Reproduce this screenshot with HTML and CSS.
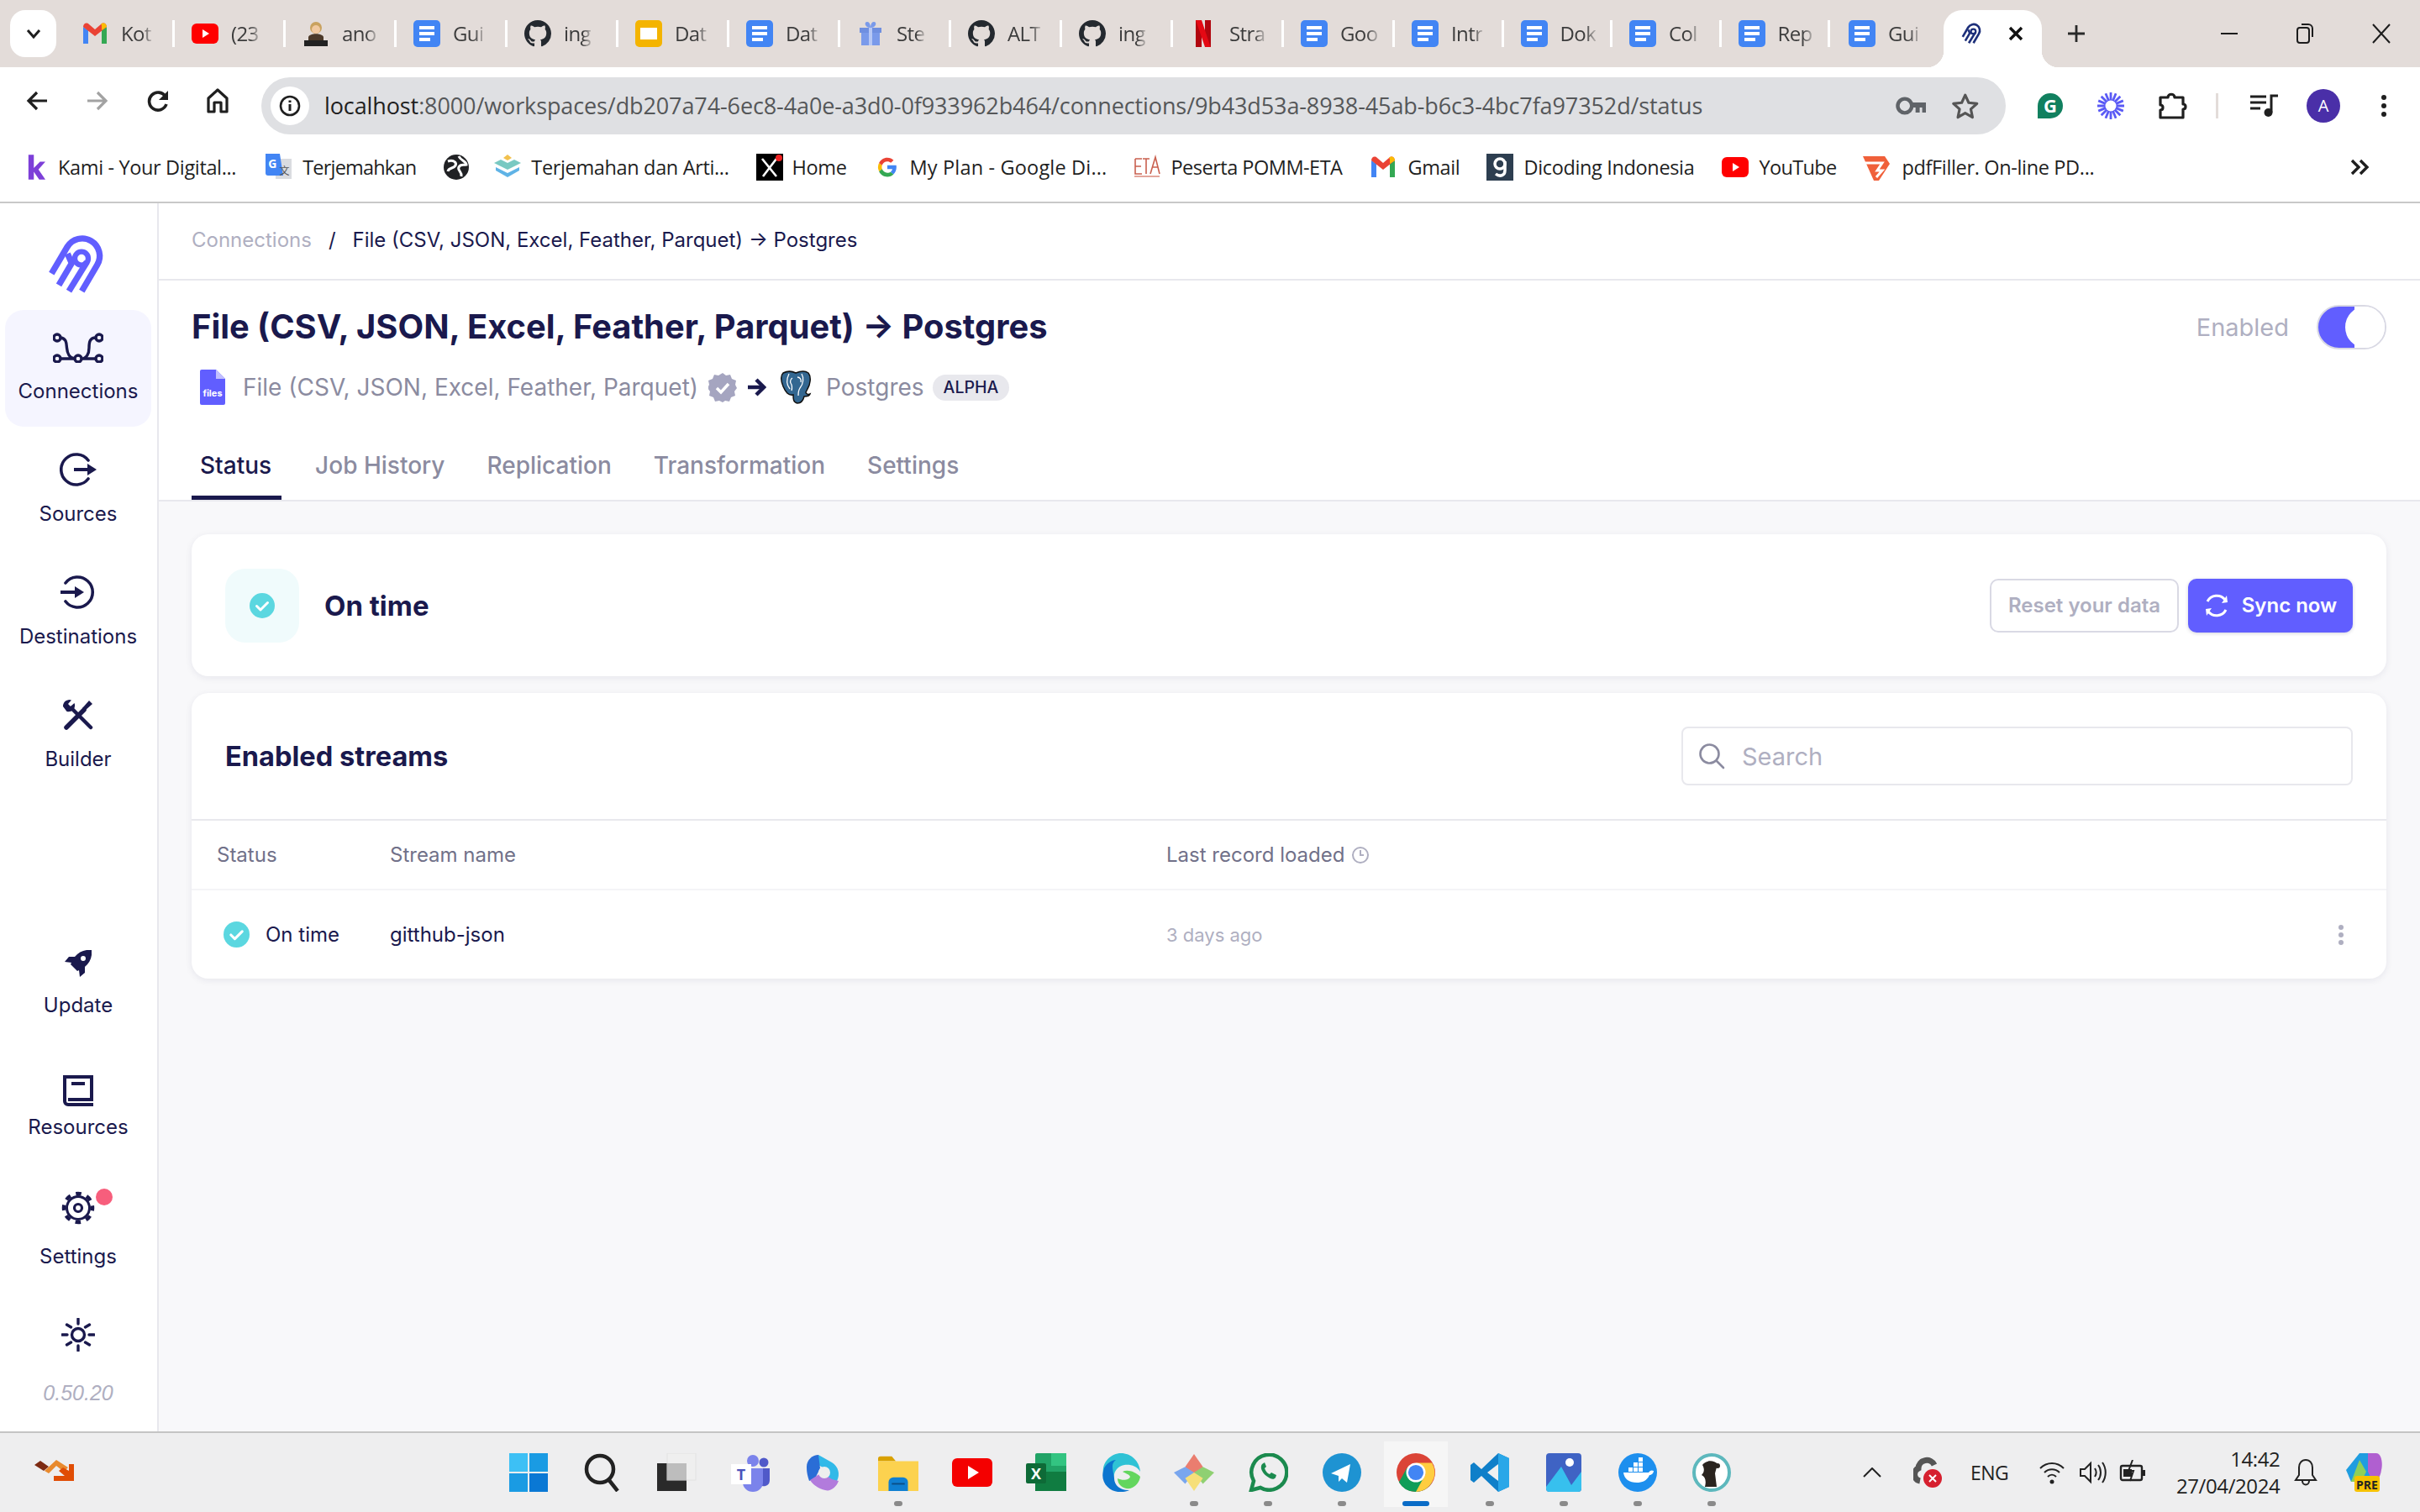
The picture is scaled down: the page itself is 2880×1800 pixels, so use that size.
FILE: index.html
```html
<!DOCTYPE html>
<html lang="en">
<head>
<meta charset="utf-8">
<title>Airbyte status</title>
<link rel="stylesheet" href="styles.css">
</head>
<body>
<svg class="defs" width="0" height="0" aria-hidden="true">
  <symbol id="i-docs" viewBox="0 0 32 32"><rect width="32" height="32" rx="5" fill="#4285f4"/><rect x="7" y="7" width="18" height="4" fill="#fff"/><rect x="7" y="14" width="18" height="4" fill="#fff"/><rect x="7" y="21" width="13" height="4" fill="#fff"/></symbol>
  <symbol id="i-gh" viewBox="0 0 16 16"><path fill="#24292f" d="M8 0C3.58 0 0 3.58 0 8c0 3.54 2.29 6.53 5.47 7.59.4.07.55-.17.55-.38 0-.19-.01-.82-.01-1.49-2.01.37-2.53-.49-2.69-.94-.09-.23-.48-.94-.82-1.13-.28-.15-.68-.52-.01-.53.63-.01 1.08.58 1.23.82.72 1.21 1.87.87 2.33.66.07-.52.28-.87.51-1.07-1.78-.2-3.64-.89-3.64-3.95 0-.87.31-1.59.82-2.15-.08-.2-.36-1.02.08-2.12 0 0 .67-.21 2.2.82.64-.18 1.32-.27 2-.27.68 0 1.36.09 2 .27 1.53-1.04 2.2-.82 2.2-.82.44 1.1.16 1.92.08 2.12.51.56.82 1.27.82 2.15 0 3.07-1.87 3.75-3.65 3.95.29.25.54.73.54 1.48 0 1.07-.01 1.93-.01 2.2 0 .21.15.46.55.38A8.013 8.013 0 0016 8c0-4.42-3.58-8-8-8z"/></symbol>
  <symbol id="i-gmail" viewBox="0 0 32 32"><path d="M2 28V8l6 4v16z" fill="#4285f4"/><path d="M24 28V12l6-4v20z" fill="#34a853"/><path d="M2 8c0-4 4-6 7-3l7 6 7-6c3-3 7-1 7 3l-14 11z" fill="#ea4335"/><path d="M23 5c3-3 7-1 7 3l-6 4v-6z" fill="#fbbc04"/></symbol>
  <symbol id="i-yt" viewBox="0 0 32 32"><rect y="4" width="32" height="24" rx="6" fill="#f00"/><path d="M13 11l8 5-8 5z" fill="#fff"/></symbol>
  <symbol id="i-air" viewBox="0 0 270 270"><g fill="none" stroke-linecap="butt" stroke-linejoin="round"><path stroke-width="22" d="M148 230L203 136A62 62 0 0 0 96 72L40 167"/><path stroke-width="22" d="M66 208L112 130L97 96"/><circle cx="147" cy="113" r="24" stroke-width="19"/><path stroke-width="22" d="M102 230L166 126"/></g></symbol>
  <symbol id="i-check" viewBox="0 0 30 30"><circle cx="15" cy="15" r="15" fill="#5bd7e0"/><path d="M8.500 15.500l4.500 4.500 8.500-8.500" fill="none" stroke="#fff" stroke-width="3" stroke-linecap="round" stroke-linejoin="round"/></symbol>
</svg>

<div class="screen">
  <header class="tabstrip">
    <button class="tabmenu" type="button"><svg width="18" height="12" viewBox="0 0 18 12"><path d="M2 2l7 8 7-8" fill="none" stroke="#1f1f1f" stroke-width="3"/></svg></button>
    <div class="tab tab--first"><svg class="fav"><use href="#i-gmail"/></svg><span class="tab-t">Kot</span></div>
    <div class="tab"><svg class="fav"><use href="#i-yt"/></svg><span class="tab-t">(23</span></div>
    <div class="tab"><svg class="fav" viewBox="0 0 32 32"><circle cx="16" cy="9" r="7" fill="#c9a25f"/><path d="M7 20c2-5 16-5 18 0v8H7z" fill="#4c3a2a"/><circle cx="16" cy="11" r="5" fill="#f1c9a0"/><rect x="2" y="24" width="28" height="7" fill="#222"/></svg><span class="tab-t">ano</span></div>
    <div class="tab"><svg class="fav"><use href="#i-docs"/></svg><span class="tab-t">Gui</span></div>
    <div class="tab"><svg class="fav"><use href="#i-gh"/></svg><span class="tab-t">ing</span></div>
    <div class="tab"><svg class="fav" viewBox="0 0 32 32"><rect width="32" height="32" rx="5" fill="#f4b400"/><rect x="6" y="9" width="20" height="14" fill="#fff"/></svg><span class="tab-t">Dat</span></div>
    <div class="tab"><svg class="fav"><use href="#i-docs"/></svg><span class="tab-t">Dat</span></div>
    <div class="tab"><svg class="fav" viewBox="0 0 32 32"><rect x="3" y="9" width="26" height="6" fill="#6f8fe0"/><rect x="5" y="15" width="22" height="15" fill="#7a9aea"/><rect x="14" y="9" width="4" height="21" fill="#b7c8f5"/><path d="M16 9C9 9 8 2 12 2s4 7 4 7 0-7 4-7 3 7-4 7z" fill="#7a9aea"/></svg><span class="tab-t">Ste</span></div>
    <div class="tab"><svg class="fav"><use href="#i-gh"/></svg><span class="tab-t">ALT</span></div>
    <div class="tab"><svg class="fav"><use href="#i-gh"/></svg><span class="tab-t">ing</span></div>
    <div class="tab"><svg class="fav" viewBox="0 0 32 32"><path d="M7 0h7v32l-7 1z" fill="#b1060f"/><path d="M18 0h7v33l-7-1z" fill="#b1060f"/><path d="M7 0h7l11 33-7-1z" fill="#e50914"/></svg><span class="tab-t">Stra</span></div>
    <div class="tab"><svg class="fav"><use href="#i-docs"/></svg><span class="tab-t">Goo</span></div>
    <div class="tab tab--narrow"><svg class="fav"><use href="#i-docs"/></svg><span class="tab-t">Intr</span></div>
    <div class="tab tab--narrow"><svg class="fav"><use href="#i-docs"/></svg><span class="tab-t">Dok</span></div>
    <div class="tab tab--narrow"><svg class="fav"><use href="#i-docs"/></svg><span class="tab-t">Col</span></div>
    <div class="tab tab--narrow"><svg class="fav"><use href="#i-docs"/></svg><span class="tab-t">Rep</span></div>
    <div class="tab tab--last"><svg class="fav"><use href="#i-docs"/></svg><span class="tab-t">Gui</span></div>
    <div class="tab-active">
      <svg class="fav air-navy"><use href="#i-air"/></svg>
      <svg width="18" height="18" viewBox="0 0 18 18"><path d="M2 2l14 14M16 2L2 16" stroke="#111" stroke-width="3.400"/></svg>
    </div>
    <svg class="newtab" width="22" height="22" viewBox="0 0 22 22"><path d="M11 1v20M1 11h20" stroke="#2a2a2a" stroke-width="2.800"/></svg>
    <div class="winctl">
      <svg width="20" height="4" viewBox="0 0 20 4"><path d="M0 2h20" stroke="#1c1c1c" stroke-width="2"/></svg>
      <svg width="22" height="26" viewBox="0 0 22 26"><rect x="2" y="6" width="14" height="18" rx="3" fill="none" stroke="#1c1c1c" stroke-width="2"/><path d="M7 2h8a5 5 0 0 1 5 5v10" fill="none" stroke="#1c1c1c" stroke-width="2"/></svg>
      <svg width="22" height="24" viewBox="0 0 22 24"><path d="M1 1l20 22M21 1L1 23" stroke="#1c1c1c" stroke-width="2"/></svg>
    </div>
  </header>

  <div class="toolbar">
    <svg class="tool tool--back" width="26" height="24" viewBox="0 0 26 24"><path d="M25 12H4M13 2L3 12l10 10" fill="none" stroke="#1f1f1f" stroke-width="3.200"/></svg>
    <svg class="tool tool--fwd" width="26" height="24" viewBox="0 0 26 24"><path d="M1 12h21M13 2l10 10-10 10" fill="none" stroke="#a2a2a2" stroke-width="3.200"/></svg>
    <svg class="tool tool--reload" width="26" height="28" viewBox="0 0 26 28"><path d="M22 9a10.500 10.500 0 1 0 1 9" fill="none" stroke="#1f1f1f" stroke-width="3.600"/><path d="M25 2v11H14z" fill="#1f1f1f"/></svg>
    <svg class="tool tool--home" width="26" height="30" viewBox="0 0 26 30"><path d="M2 12L13 2l11 10v16h-7V17H9v11H2z" fill="none" stroke="#1f1f1f" stroke-width="3.200" stroke-linejoin="round"/></svg>
    <div class="omnibox">
      <span class="omni-info"><svg width="26" height="26" viewBox="0 0 26 26"><circle cx="13" cy="13" r="11" fill="none" stroke="#1f1f1f" stroke-width="2.600"/><path d="M13 11v8M13 6.500v2.500" stroke="#1f1f1f" stroke-width="3"/></svg></span>
      <span class="omni-url"><span class="omni-host">localhost</span>:8000/workspaces/db207a74-6ec8-4a0e-a3d0-0f933962b464/connections/9b43d53a-8938-45ab-b6c3-4bc7fa97352d/status</span>
      <svg width="37" height="26" viewBox="0 0 37 26"><circle cx="11" cy="13" r="8.500" fill="none" stroke="#5f6368" stroke-width="4.500"/><path d="M19 9h18v12h-5v-6h-3v6h-5v-6h-5z" fill="#5f6368"/></svg>
      <svg class="omni-star" width="34" height="32" viewBox="0 0 34 32"><path d="M17 3l4.200 9.200 10 1.100-7.400 6.700 2 9.800-8.800-5-8.800 5 2-9.800-7.400-6.700 10-1.100z" fill="none" stroke="#555" stroke-width="3.200" stroke-linejoin="round"/></svg>
    </div>
    <div class="ext">
      <svg width="30" height="30" viewBox="0 0 30 30"><path d="M15 0a15 15 0 0 0-15 15v15h15a15 15 0 0 0 0-30z" fill="#11805f"/><text x="15" y="23" text-anchor="middle" class="ext-g">G</text></svg>
      <svg class="ext-star" width="32" height="32" viewBox="0 0 32 32"><g stroke="#5a5af5" stroke-width="2.800"><path d="M16 0v32M0 16h32M4.700 4.700l22.600 22.600M27.300 4.700L4.700 27.300M9.900 1.200l12.200 29.600M22.100 1.200L9.900 30.800M1.200 9.900l29.600 12.200M30.800 9.900L1.200 22.100"/></g><circle cx="16" cy="16" r="6.500" fill="#fff"/></svg>
      <svg class="ext-puzzle" width="36" height="32" viewBox="0 0 36 32"><path d="M3 6h9c0-5 8-5 8 0h10v8c4 0 4 6 0 6v10H3v-9c4 0 4-6 0-6z" fill="none" stroke="#1f1f1f" stroke-width="3.200" stroke-linejoin="round"/></svg>
      <span class="ext-sep"></span>
      <svg class="ext-music" width="34" height="28" viewBox="0 0 34 28"><path d="M0 3h19M0 10h19M0 17h12" stroke="#1f1f1f" stroke-width="3"/><path d="M25 22V2h8" fill="none" stroke="#1f1f1f" stroke-width="3"/><circle cx="21.500" cy="22" r="5" fill="#1f1f1f"/></svg>
      <span class="avatar">A</span>
      <svg class="ext-dots" width="6" height="26" viewBox="0 0 6 26"><circle cx="3" cy="3" r="3" fill="#1f1f1f"/><circle cx="3" cy="13" r="3" fill="#1f1f1f"/><circle cx="3" cy="23" r="3" fill="#1f1f1f"/></svg>
    </div>
  </div>

  <nav class="bookmarks">
    <span class="bm bm--kami"><svg class="bm-i bm-i--k" viewBox="0 0 24 32"><path d="M2 0h7v17l8-8h7l-9 10 9 13h-8l-7-10v10H2z" fill="#7d3fd8"/></svg>Kami - Your Digital...</span>
    <span class="bm bm--terj"><svg class="bm-i" viewBox="0 0 32 32"><rect x="12" y="6" width="19" height="24" fill="#dadce0"/><path d="M0 0h17l4 26H3a3 3 0 0 1-3-3z" fill="#4285f4"/><text x="8" y="17" text-anchor="middle" class="bm-g">G</text><text x="22" y="25" text-anchor="middle" class="bm-z">文</text></svg>Terjemahkan</span>
    <span class="bm bm--globe"><svg class="bm-i" viewBox="0 0 32 32"><circle cx="16" cy="16" r="15" fill="#202124"/><path d="M6 9c6-2 11 1 9 5s-8 2-9 7M19 3c2 5 9 6 9 10-4 1-7-1-9 3s4 5 3 11" fill="none" stroke="#fff" stroke-width="3"/></svg></span>
    <span class="bm"><svg class="bm-i" viewBox="0 0 32 32"><path d="M0 11l8-4 8 4 8-4 8 4-16 8z" fill="#79c9c2"/><path d="M2 16l14 7 14-7v4l-14 8-14-8z" fill="#5fb3e6"/><path d="M11 5l5-4 5 4-5 3z" fill="#f2c14e"/></svg>Terjemahan dan Arti...</span>
    <span class="bm bm--home"><svg class="bm-i" viewBox="0 0 32 32"><rect width="32" height="32" fill="#000"/><path d="M7 6l17 21M24 6L8 27" stroke="#fff" stroke-width="2.600"/><circle cx="27" cy="5" r="4" fill="#e22"/></svg>Home</span>
    <span class="bm bm--plan"><svg class="bm-i bm-i--g" viewBox="0 0 48 48"><path d="M44 24c0-1.500-.1-3-.4-4H24v8h11c-.5 3-2 5-4 6.500l6.500 5C41.500 36 44 30.500 44 24z" fill="#4285f4"/><path d="M24 45c5.600 0 10.300-1.900 13.500-5.500l-6.500-5c-1.800 1.200-4.100 2-7 2-5.400 0-10-3.600-11.600-8.600l-6.700 5.200C9 40.400 15.900 45 24 45z" fill="#34a853"/><path d="M12.400 28a13 13 0 0 1 0-8l-6.700-5.200a21 21 0 0 0 0 18.400z" fill="#fbbc05"/><path d="M24 11.500c3 0 5.700 1 7.800 3l5.900-5.900C34.300 5.200 29.600 3 24 3 15.900 3 9 7.600 5.700 14.800l6.700 5.200C14 15 18.600 11.500 24 11.500z" fill="#ea4335"/></svg>My Plan - Google Di...</span>
    <span class="bm bm--pom"><svg class="bm-i" viewBox="0 0 32 32"><path d="M2 6h8M2 6v18h8M2 15h7M11 6h8M15 6v18M20 24l6-20 5 20M23 16h6" fill="none" stroke="#c9604f" stroke-width="1.600"/><rect x="1" y="26" width="30" height="2" fill="#e3a69c"/></svg>Peserta POMM-ETA</span>
    <span class="bm bm--gmail"><svg class="bm-i"><use href="#i-gmail"/></svg>Gmail</span>
    <span class="bm"><svg class="bm-i" viewBox="0 0 32 32"><rect width="32" height="32" fill="#2d3e50"/><path d="M11 24c5 4 11 2 11-4V9" fill="none" stroke="#fff" stroke-width="3.500"/><circle cx="16" cy="12" r="6" fill="none" stroke="#fff" stroke-width="3.500"/></svg>Dicoding Indonesia</span>
    <span class="bm bm--yt"><svg class="bm-i"><use href="#i-yt"/></svg>YouTube</span>
    <span class="bm bm--pdf"><svg class="bm-i" viewBox="0 0 32 32"><path d="M0 3h26l6 9-13 20h-6z" fill="#f0603a"/><path d="M3 11h20l-6 9h6l-7 8" fill="none" stroke="#fff" stroke-width="3"/></svg>pdfFiller. On-line PD...</span>
    <svg class="bm-more" width="24" height="20" viewBox="0 0 24 20"><path d="M2 2l8 8-8 8M12 2l8 8-8 8" fill="none" stroke="#1f1f1f" stroke-width="3.400"/></svg>
  </nav>

  <div class="app">
    <aside class="side">
      <svg class="logo air-purple"><use href="#i-air"/></svg>
      <a class="nav nav--active">
        <span class="nav-i"><svg width="60" height="36" viewBox="0 0 60 36"><g fill="none" stroke="#1a194d" stroke-width="3.400"><circle cx="5" cy="6" r="4"/><circle cx="55" cy="6" r="4"/><circle cx="5" cy="31" r="4"/><circle cx="30" cy="31" r="4"/><circle cx="55" cy="31" r="4"/><path d="M9 31h17M34 31h17M9 6c7 1 7 6 7.500 12s3 13 9.500 13M51 6c-7 0-8 5-8 12s-3 13-9 13"/></g></svg></span>
        <span class="nav-l">Connections</span>
      </a>
      <a class="nav">
        <span class="nav-i"><svg width="44" height="40" viewBox="0 0 44 40"><path d="M34 9A18 18 0 1 0 34 31" fill="none" stroke="#1a194d" stroke-width="3.600" stroke-linecap="round"/><path d="M17 20h20" stroke="#1a194d" stroke-width="4"/><path d="M33 13l11 7-11 7z" fill="#1a194d"/></svg></span>
        <span class="nav-l">Sources</span>
      </a>
      <a class="nav">
        <span class="nav-i"><svg width="42" height="40" viewBox="0 0 42 40"><path d="M6 9A18 18 0 1 1 6 31" fill="none" stroke="#1a194d" stroke-width="3.600" stroke-linecap="round"/><path d="M0 20h20" stroke="#1a194d" stroke-width="4"/><path d="M17 13l11 7-11 7z" fill="#1a194d"/></svg></span>
        <span class="nav-l">Destinations</span>
      </a>
      <a class="nav">
        <span class="nav-i"><svg width="36" height="36" viewBox="0 0 36 36"><path d="M10 10l23 23" stroke="#1a194d" stroke-width="4.500" stroke-linecap="round"/><path d="M25 12L4 33" stroke="#1a194d" stroke-width="5.500" stroke-linecap="round"/><path d="M0 8a7.500 7.500 0 0 1 10-7.500L6 5l3 3 4.500-4a7.500 7.500 0 0 1-9 10z" fill="#1a194d"/><path d="M23 10L31 1l4 4-9 8z" fill="#1a194d"/></svg></span>
        <span class="nav-l">Builder</span>
      </a>

      <div class="side-bottom">
        <a class="nav-b nav-b--update">
          <svg width="32" height="32" viewBox="0 0 32 32"><path d="M32 0c-8-1-15 2-20 8H5l-5 6 8 1-1 2 8 8 2-1 1 8 6-5v-7c6-5 9-12 8-20z" fill="#1a194d"/><circle cx="22" cy="10" r="3" fill="#fff"/></svg>
          <span class="nav-l">Update</span>
        </a>
        <a class="nav-b nav-b--res">
          <svg width="36" height="39" viewBox="0 0 36 39"><path d="M36 36H6a4 4 0 0 1-4-4V3h32v27H6" fill="none" stroke="#1a194d" stroke-width="4"/><path d="M10 11h16" stroke="#1a194d" stroke-width="4"/></svg>
          <span class="nav-l">Resources</span>
        </a>
        <a class="nav-b nav-b--set">
          <span class="gear"><svg width="40" height="40" viewBox="0 0 40 40"><circle cx="20" cy="20" r="13.500" fill="none" stroke="#1a194d" stroke-width="3"/><circle cx="20" cy="20" r="17" fill="none" stroke="#1a194d" stroke-width="4.500" stroke-dasharray="6.600 6.750" stroke-dashoffset="3.300"/><circle cx="20" cy="20" r="4.500" fill="none" stroke="#1a194d" stroke-width="3.200"/></svg><span class="badge-dot"></span></span>
          <span class="nav-l">Settings</span>
        </a>
        <a class="nav-b nav-b--ver">
          <svg width="40" height="40" viewBox="0 0 40 40"><circle cx="20" cy="20" r="7.500" fill="none" stroke="#1a194d" stroke-width="3.400"/><path d="M20 1v6M20 33v6M1 20h6M33 20h6M6.500 8l5 3M28.500 29l5 3M6.500 32l5-3M28.500 11l5-3" stroke="#1a194d" stroke-width="3.400" stroke-linecap="round"/></svg>
          <span class="ver">0.50.20</span>
        </a>
      </div>
    </aside>

    <main class="main">
      <div class="crumbs"><span class="crumb-a">Connections</span><span class="crumb-s">/</span><span class="crumb-c">File (CSV, JSON, Excel, Feather, Parquet) → Postgres</span></div>
      <section class="head">
        <div class="head-top">
          <div>
            <h1 class="title">File (CSV, JSON, Excel, Feather, Parquet) → Postgres</h1>
            <div class="pair">
              <svg class="file-i" width="30" height="42" viewBox="0 0 30 42"><path d="M2 0h17l11 11v29a2 2 0 0 1-2 2H2a2 2 0 0 1-2-2V2a2 2 0 0 1 2-2z" fill="#615eff"/><path d="M19 0l11 11H19z" fill="#c1bfff"/><text x="15" y="32" text-anchor="middle" class="file-t">files</text></svg>
              <span class="pair-src">File (CSV, JSON, Excel, Feather, Parquet)</span>
              <svg class="verif" width="34" height="35" viewBox="0 0 34 35"><path d="M17 0l4 3 5-1 2 5 5 2-1 5 2 4-3 4 1 5-5 2-2 5-5-1-3 2-4-2-5 1-2-5-5-2 1-5-3-4 2-4-1-5 5-2 2-5 5 1z" fill="#a5a5c0"/><path d="M10 18l5 5 9-10" fill="none" stroke="#fff" stroke-width="3.500"/></svg>
              <svg class="pair-arrow" width="22" height="22" viewBox="0 0 22 22"><path d="M0 11h17" stroke="#1a194d" stroke-width="4.500"/><path d="M10 2l9 9-9 9" fill="none" stroke="#1a194d" stroke-width="4.500"/></svg>
              <svg class="pg" width="38" height="40" viewBox="0 0 38 40"><path d="M4 3c6-3 11-2 15 0 5-2 11-3 15 0 4 5 2 14-1 19l-2 4c0 2 3 3 5 2-1 3-4 3-7 3-1 4-3 8-8 8-5-1-5-5-5-10-6 1-9-3-12-10C2 14 0 7 4 3z" fill="#336791" stroke="#111" stroke-width="1.500"/><path d="M11 4c-3 6-3 13 1 18M26 4c3 5 2 12-2 17-2 3-2 6-2 9M15 9c-2 1-3 4-2 6 2 3 2 5 1 9M21 8c3 0 5 3 4 6" fill="none" stroke="#fff" stroke-width="1.300"/></svg>
              <span class="pair-dst">Postgres</span>
              <span class="tag">ALPHA</span>
            </div>
          </div>
          <div class="enable">
            <span class="enable-l">Enabled</span>
            <span class="switch"><span class="knob"></span></span>
          </div>
        </div>
        <div class="tabs">
          <a class="ptab ptab--on">Status</a>
          <a class="ptab">Job History</a>
          <a class="ptab">Replication</a>
          <a class="ptab">Transformation</a>
          <a class="ptab">Settings</a>
        </div>
      </section>

      <div class="body">
        <section class="card card-status">
          <span class="st-box"><svg width="30" height="30"><use href="#i-check"/></svg></span>
          <span class="st-t">On time</span>
          <button class="btn-reset" type="button">Reset your data</button>
          <button class="btn-sync" type="button"><svg width="30" height="30" viewBox="0 0 30 30"><path d="M4 10A12.500 12.500 0 0 1 25 8M26 20A12.500 12.500 0 0 1 5 22" fill="none" stroke="#fff" stroke-width="3"/><path d="M21 12l7-1-1-8zM9 18l-7 1 1 8z" fill="#fff"/></svg>Sync now</button>
        </section>
        <section class="card card-streams">
          <div class="sc-head">
            <h2 class="sc-t">Enabled streams</h2>
            <div class="search"><svg width="32" height="32" viewBox="0 0 32 32"><circle cx="13.500" cy="13.500" r="11" fill="none" stroke="#8b8ba0" stroke-width="2.600"/><path d="M22 22l8 8" stroke="#8b8ba0" stroke-width="2.600" stroke-linecap="round"/></svg><span class="search-p">Search</span></div>
          </div>
          <div class="row row--h">
            <span>Status</span>
            <span>Stream name</span>
            <span class="lr">Last record loaded <svg width="22" height="22" viewBox="0 0 22 22"><circle cx="11" cy="11" r="9" fill="none" stroke="#afafc1" stroke-width="2"/><path d="M11 5v6h4" fill="none" stroke="#afafc1" stroke-width="2"/></svg></span>
            <span></span>
          </div>
          <div class="row row--d">
            <span class="rs"><svg width="31" height="31"><use href="#i-check"/></svg>On time</span>
            <span>gitthub-json</span>
            <span class="ago">3 days ago</span>
            <span class="kebab"><i></i><i></i><i></i></span>
          </div>
        </section>
      </div>
    </main>
  </div>

  <footer class="taskbar">
    <svg class="tb-logo" width="50" height="28" viewBox="0 0 50 28"><path d="M1 8l7-5 10 7-6 5z" fill="#7d2a12"/><path d="M13 15L27 2l14 9-5 5-9-7-9 9z" fill="#e88a2e"/><path d="M48 7v20H24v-6h13l-7-6 5-4 7 4V7z" fill="#e04d05"/></svg>
    <div class="apps">
      <div class="app-i"><svg viewBox="0 0 46 46"><rect width="22" height="22" fill="#3dc0f5"/><rect x="24" width="22" height="22" fill="#1a9be3"/><rect y="24" width="22" height="22" fill="#1a9be3"/><rect x="24" y="24" width="22" height="22" fill="#0a78d4"/></svg><i class="dot dot--off"></i></div>
      <div class="app-i"><svg viewBox="0 0 46 46"><circle cx="20" cy="19" r="16" fill="none" stroke="#222" stroke-width="4.500"/><path d="M30 31l11 14" stroke="#222" stroke-width="4.500"/></svg><i class="dot dot--off"></i></div>
      <div class="app-i"><svg viewBox="0 0 46 46"><rect x="0" y="12" width="35" height="33" fill="#2a2a2a"/><rect x="12" y="0" width="34" height="32" fill="#efefef" stroke="#e2e2e2"/><rect x="12" y="12" width="23" height="20" fill="#bdbdbd"/></svg><i class="dot dot--off"></i></div>
      <div class="app-i"><svg viewBox="0 0 46 46"><circle cx="26" cy="9" r="7" fill="#7b83eb"/><circle cx="39" cy="11" r="5.500" fill="#5059c9"/><path d="M33 18h13v14c0 6-5 8-9 7z" fill="#5059c9"/><path d="M14 18h24v17a12 11 0 0 1-24 0z" fill="#7b83eb"/><rect x="0" y="13" width="24" height="24" fill="#fff"/><text x="12" y="32" text-anchor="middle" class="ta-t">T</text></svg><i class="dot dot--off"></i></div>
      <div class="app-i"><svg viewBox="0 0 46 46"><path d="M16 2l16 9c8 5 10 14 6 22l-14 2 4-14-12-7z" fill="#31b9e8"/><path d="M2 16c0-8 7-14 14-14l2 16-6 12-7 3c-2-6-3-10-3-17z" fill="#2a6dd6"/><path d="M6 32l14-9 12 8 8 2c-3 8-10 13-16 11-8-2-14-6-18-12z" fill="#b27bdc"/><circle cx="23" cy="23" r="7" fill="#eee"/></svg><i class="dot dot--off"></i></div>
      <div class="app-i"><svg viewBox="0 0 50 46"><path d="M0 6a3 3 0 0 1 3-3h14l5 6H0z" fill="#d9a100"/><path d="M0 9h50v37H0z" fill="#fcd24f"/><path d="M13 46V35a6 6 0 0 1 6-6h12a6 6 0 0 1 6 6v11z" fill="#0f7fd1"/><rect x="17" y="36" width="16" height="2" fill="#0a4e86"/></svg><i class="dot"></i></div>
      <div class="app-i"><svg viewBox="0 0 48 46"><rect y="6" width="48" height="34" rx="6" fill="#f40000"/><path d="M19 15l13 8-13 8z" fill="#fff"/></svg><i class="dot dot--off"></i></div>
      <div class="app-i"><svg viewBox="0 0 48 46"><rect x="11" y="0" width="37" height="45" rx="2" fill="#21a366"/><rect x="30" y="0" width="18" height="15" fill="#33c481"/><rect x="11" y="22" width="37" height="23" fill="#107c41"/><rect x="0" y="12" width="24" height="24" rx="2" fill="#0e6a37"/><text x="12" y="31" text-anchor="middle" class="xl-t">X</text></svg><i class="dot dot--off"></i></div>
      <div class="app-i"><svg viewBox="0 0 48 46"><path d="M4 24C2 10 14 0 25 0c12 0 22 9 23 22-4-7-12-9-19-8-8 1-14 9-12 18z" fill="#2fc2d5"/><path d="M17 30c0 9 9 15 18 14-7 3-18 4-26-4C4 35 2 28 4 21c2-9 11-13 15-13-7 5-3 12-2 22z" fill="#0c75cf"/><path d="M27 22c6-3 15 0 21 6-1 6-5 12-12 14-8 1-15-4-15-12 6 3 14 2 15-2-1-3-6-4-9-6z" fill="#63d65e"/></svg><i class="dot dot--off"></i></div>
      <div class="app-i"><svg viewBox="0 0 50 46"><path d="M25 0l11 16-11 14L14 16z" fill="#ea7d6f"/><path d="M0 23l14-7 11 7-11 14z" fill="#79a6ee"/><path d="M36 16l14 7-14 14-11-14z" fill="#8fd072"/><path d="M14 30l11-7 11 7-11 16z" fill="#f6df79"/></svg><i class="dot"></i></div>
      <div class="app-i"><svg viewBox="0 0 46 46"><path d="M3 44l3-11A21 21 0 1 1 14 41z" fill="none" stroke="#1b8a4e" stroke-width="4.500"/><path d="M16 13c-3 4 0 10 5 14s9 5 11 2l1-3-6-3-2 2c-3-1-5-4-6-7l2-2-2-5z" fill="#1b8a4e"/></svg><i class="dot"></i></div>
      <div class="app-i"><svg viewBox="0 0 46 46"><circle cx="23" cy="23" r="23" fill="#1e93d2"/><path d="M10 24L33 13l-4 22-6-5-4 4v-7z" fill="#fff"/></svg><i class="dot"></i></div>
      <div class="app-i app-i--on"><svg viewBox="0 0 48 48"><circle cx="24" cy="24" r="24" fill="#db4437"/><path d="M24 24L44 36a24 24 0 0 1-20 12A24 24 0 0 1 3 36l10-18z" fill="#0f9d58"/><path d="M24 12h20a24 24 0 0 1 0 24 24 24 0 0 1-20 12l12-22z" fill="#ffcd40"/><circle cx="24" cy="24" r="12" fill="#fff"/><circle cx="24" cy="24" r="9.500" fill="#4285f4"/></svg><i class="dot dot--bar"></i></div>
      <div class="app-i"><svg viewBox="0 0 46 46"><path d="M33 0l13 6v34l-13 6L13 27 4 35 0 32V14l4-3 9 8z" fill="#0f7fc9"/><path d="M33 0l13 6v34l-13 6z" fill="#2aa7e8"/><path d="M33 13L20 23l13 10z" fill="#f0f0f0"/></svg><i class="dot"></i></div>
      <div class="app-i"><svg viewBox="0 0 46 46"><rect x="2" width="42" height="46" rx="4" fill="#3f63c4"/><path d="M2 40l18-24 12 22 12-16v20a4 4 0 0 1-4 4H6a4 4 0 0 1-4-4z" fill="#37c0ee"/><circle cx="30" cy="11" r="5" fill="#fff"/></svg><i class="dot"></i></div>
      <div class="app-i"><svg viewBox="0 0 46 46"><circle cx="23" cy="23" r="23" fill="#1d8fee"/><path d="M6 23h30c2-3 4-3 6-2 0 3-3 5-5 5-3 7-9 9-15 9-9 0-15-4-16-12z" fill="#fff"/><g fill="#fff"><rect x="12" y="17" width="5" height="5"/><rect x="18" y="17" width="5" height="5"/><rect x="24" y="17" width="5" height="5"/><rect x="18" y="11" width="5" height="5"/><rect x="24" y="11" width="5" height="5"/><rect x="24" y="5" width="5" height="5"/></g></svg><i class="dot"></i></div>
      <div class="app-i"><svg viewBox="0 0 46 46"><circle cx="23" cy="23" r="21" fill="#fff" stroke="#5db8bd" stroke-width="4"/><path d="M12 14c4-6 14-6 18-1l-3 11 2 16H15c2-8 0-12-4-14 3-3 4-7 1-12z" fill="#2a241f"/><circle cx="30" cy="15" r="3" fill="#2a241f"/></svg><i class="dot"></i></div>
    </div>
    <div class="tray">
      <svg class="tr-caret" width="22" height="12" viewBox="0 0 22 12"><path d="M1 11l10-10 10 10" fill="none" stroke="#222" stroke-width="2"/></svg>
      <svg class="tr-cloud" width="34" height="40" viewBox="0 0 34 40"><path d="M8 30a8 8 0 0 1-2-15 10 10 0 0 1 19-4" fill="none" stroke="#555" stroke-width="7"/><circle cx="23" cy="27" r="11" fill="#d6202f"/><path d="M19 23l8 8M27 23l-8 8" stroke="#fff" stroke-width="2"/></svg>
      <span class="tr-eng">ENG</span>
      <svg class="tr-wifi" width="30" height="30" viewBox="0 0 30 30"><path d="M1 10c8-8 20-8 28 0M6 15c5-5 13-5 18 0M10 20c3-3 7-3 10 0" fill="none" stroke="#222" stroke-width="2"/><circle cx="15" cy="26" r="2.500" fill="#222"/></svg>
      <svg class="tr-vol" width="32" height="30" viewBox="0 0 32 30"><path d="M1 11h5l7-7v22l-7-7H1z" fill="none" stroke="#222" stroke-width="2"/><path d="M18 10c2 3 2 7 0 10M22 6c4 5 4 13 0 18M27 3c5 7 5 17 0 24" fill="none" stroke="#222" stroke-width="2"/></svg>
      <svg class="tr-bat" width="32" height="30" viewBox="0 0 32 30"><rect x="2" y="7" width="25" height="17" rx="2" fill="none" stroke="#222" stroke-width="2.400"/><rect x="5" y="11" width="10" height="9" fill="#222"/><rect x="28" y="12" width="3" height="7" fill="#222"/><path d="M16 0l-5 13h6l-4 12" fill="none" stroke="#222" stroke-width="2"/></svg>
      <div class="clock"><span>14:42</span><span>27/04/2024</span></div>
      <svg class="tr-bell" width="28" height="34" viewBox="0 0 28 34"><path d="M14 2c-5 0-8 4-8 9v9l-4 6h24l-4-6v-9c0-5-3-9-8-9zM10 27c0 6 8 6 8 0" fill="none" stroke="#222" stroke-width="2"/></svg>
      <svg class="tr-copilot" width="48" height="46" viewBox="0 0 48 46"><path d="M16 0h16l8 16-6 18H6L0 20z" fill="#1f9de0"/><path d="M26 0h10c6 0 8 12 6 20-1 8-5 14-10 14l-6-12z" fill="#b05fd0"/><path d="M6 34L16 8l8 14-6 12z" fill="#8dd05a"/><rect x="10" y="27" width="30" height="19" rx="3" fill="#f6c200"/><text x="25" y="43" text-anchor="middle" class="pre-t">PRE</text></svg>
    </div>
  </footer>
</div>
</body>
</html>
```

FILE: styles.css
```css
* { box-sizing: border-box; }
html, body { margin: 0; padding: 0; }
body { width: 2880px; height: 1800px; overflow: hidden; background: #fff; font-family: Inter, "Liberation Sans", sans-serif; color: #1a194d; }
.defs { position: absolute; }
.screen { width: 2880px; height: 1800px; display: flex; flex-direction: column; }

/* browser tab strip */
.tabstrip { height: 80px; flex: none; background: #e3dcd9; display: flex; align-items: flex-start; padding-left: 12px; font-family: "Open Sans", "Noto Sans", sans-serif; }
.tabmenu { width: 55px; height: 56px; margin: 12px 6px 0 0; border: 0; border-radius: 18px; background: #fff; display: flex; align-items: center; justify-content: center; padding: 0; }
.tab { width: 132px; height: 32px; margin-top: 24px; padding-left: 20px; border-right: 3px solid #fff; display: flex; align-items: center; gap: 15px; }
.tab--first { width: 135px; padding-left: 24px; }
.tab--narrow { width: 129.500px; }
.tab--last { width: 135px; border-right: 0; padding-left: 22px; }
.fav { width: 32px; height: 32px; flex: none; }
.tab-t { white-space: nowrap; font-size: 24px; line-height: 32px; letter-spacing: -0.6px; color: #3c3c3c; -webkit-mask-image: linear-gradient(90deg, #000 70%, rgba(0,0,0,0.25) 100%); mask-image: linear-gradient(90deg, #000 70%, rgba(0,0,0,0.25) 100%); }
.tab-active { position: relative; width: 117px; height: 68px; margin-top: 12px; background: #fff; border-radius: 22px 22px 0 0; display: flex; align-items: center; gap: 27px; padding: 0 0 12px 18px; }
.tab-active::before, .tab-active::after { content: ""; position: absolute; bottom: 0; width: 20px; height: 20px; }
.tab-active::before { left: -20px; background: radial-gradient(circle at 0 0, transparent 20px, #fff 20.500px); }
.tab-active::after { right: -20px; background: radial-gradient(circle at 100% 0, transparent 20px, #fff 20.500px); }
.air-navy { stroke: #1d2f7a; }
.air-purple { stroke: #615eff; }
.newtab { margin: 29px 0 0 30px; flex: none; }
.winctl { display: flex; align-items: center; margin: 27px 0 0 161px; }
.winctl svg:nth-child(2) { margin-left: 69px; }
.winctl svg:nth-child(3) { margin-left: 69px; }

/* toolbar */
.toolbar { height: 80px; flex: none; background: #fff; border-radius: 20px 20px 0 0; display: flex; align-items: center; padding-left: 31px; position: relative; z-index: 1; }
.tool { flex: none; }
.tool--fwd { margin-left: 46px; }
.tool--reload { margin-left: 46px; }
.tool--home { margin-left: 45px; }
.omnibox { width: 2076px; height: 68px; margin-left: 39px; margin-top: 12px; background: #dfe0e3; border-radius: 34px; display: flex; align-items: center; padding: 0 31px 0 11px; font-family: "Open Sans", "Noto Sans", sans-serif; }
.omni-info { width: 46px; height: 46px; background: #fff; border-radius: 50%; display: flex; align-items: center; justify-content: center; flex: none; }
.omni-url { margin-left: 18px; width: 1870px; padding-bottom: 2px; flex: none; font-size: 27px; letter-spacing: -0.11px; color: #555759; white-space: nowrap; }
.omni-host { color: #1f1f1f; }
.omni-star { margin-left: 30px; }
.ext { display: flex; align-items: center; margin-left: 38px; margin-top: 12px; }
.ext-g { font: 700 22px "Open Sans", sans-serif; fill: #fff; }
.ext-star { margin-left: 41px; }
.ext-puzzle { margin-left: 40px; }
.ext-sep { width: 3px; height: 30px; background: #e3dcd9; margin-left: 33px; }
.ext-music { margin-left: 38px; }
.avatar { width: 40px; height: 40px; margin-left: 33px; border-radius: 50%; background: #4a2fa8; color: #fff; font: 400 20px/40px "Open Sans", sans-serif; text-align: center; }
.ext-dots { margin-left: 49px; }

/* bookmarks */
.bookmarks { height: 80px; flex: none; display: flex; align-items: center; gap: 32px; padding: 0 0 2px 32px; font-family: "Open Sans", "Noto Sans", sans-serif; font-size: 23.500px; letter-spacing: -0.35px; color: #1f1f1f; }
.bm { display: flex; align-items: center; gap: 12px; white-space: nowrap; }
.bm-i { width: 32px; height: 32px; flex: none; }
.bm-i--k { width: 22px; }
.bm-i--g { width: 26px; }
.bm-g { font: 700 14px "Open Sans", sans-serif; fill: #fff; }
.bm-z { font: 400 12px "Noto Sans CJK SC", sans-serif; fill: #555; }
.bm--kami { gap: 15px; margin-right: 3px; }
.bm--terj { letter-spacing: -0.8px; }
.bm--globe { margin-right: -3px; }
.bm--home { gap: 11px; margin-right: 3px; }
.bm--plan { gap: 14px; letter-spacing: 0.17px; }
.bm--pom { letter-spacing: -0.5px; margin-right: 1px; }
.bm--gmail { gap: 13px; }
.bm--yt { margin-left: 1px; letter-spacing: -0.65px; }
.bm--pdf { gap: 14px; }
.bm-more { margin-left: 273px; }

/* app */
.app { flex: 1; display: flex; min-height: 0; border-top: 2px solid #c8c8c8; border-bottom: 2px solid #c4c4c4; }
.side { width: 189px; flex: none; background: #fff; border-right: 2px solid #e8e8ed; display: flex; flex-direction: column; align-items: center; padding: 0 7px 0 6px; }
.logo { width: 90px; height: 90px; margin: 28px 0 9px; flex: none; }
.nav { width: 174px; height: 139px; margin-bottom: 7px; padding-bottom: 5px; border-radius: 22px; display: flex; flex-direction: column; align-items: center; justify-content: center; gap: 20px; flex: none; }
.nav--active { background: #f5f5ff; gap: 19px; }
.nav-i { height: 40px; display: flex; align-items: center; justify-content: center; }
.nav-l { font-size: 24px; line-height: 26px; color: #1a194d; white-space: nowrap; }
.side-bottom { margin-top: auto; display: flex; flex-direction: column; align-items: center; padding-bottom: 33px; }
.nav-b { display: flex; flex-direction: column; align-items: center; }
.nav-b--update { gap: 21px; }
.nav-b--res { gap: 11px; margin-top: 69px; }
.nav-b--set { gap: 25px; margin-top: 63px; }
.nav-b--ver { gap: 36px; margin-top: 60px; }
.gear { position: relative; display: block; width: 40px; height: 40px; }
.badge-dot { position: absolute; left: 41px; top: -3px; width: 20px; height: 20px; border-radius: 50%; background: #f75e7c; }
.ver { font: italic 400 25px/26px "Liberation Sans", sans-serif; color: #afafc1; }

/* main */
.main { flex: 1; display: flex; flex-direction: column; min-width: 0; }
.crumbs { height: 86px; flex: none; padding: 0 0 4px 39px; border-bottom: 2px solid #e8e8ed; display: flex; align-items: center; font-size: 24px; color: #1a194d; box-sizing: content-box; }
.crumb-a { color: #afafc1; }
.crumb-s { margin: 0 20px; }
.head { height: 263px; flex: none; background: #fff; border-bottom: 2px solid #e8e8ed; padding: 0 40px 0 39px; display: flex; flex-direction: column; }
.head-top { display: flex; justify-content: space-between; align-items: flex-start; }
.title { margin: 30px 0 0; font-size: 39.850px; line-height: 50px; font-weight: 700; color: #1a194d; white-space: nowrap; }
.pair { display: flex; align-items: center; height: 44px; margin-top: 25px; padding-left: 10px; font-size: 28px; color: #8b8ba0; white-space: nowrap; }
.file-t { font: 700 11px Inter, sans-serif; fill: #fff; }
.pair-src { margin-left: 21px; }
.verif { margin-left: 12px; }
.pair-arrow { margin-left: 13px; }
.pg { margin-left: 16px; }
.pair-dst { margin-left: 17px; }
.tag { margin-left: 10px; height: 31px; padding: 0 13px; border-radius: 16px; background: #e8e8ed; color: #1a194d; font-size: 19.500px; font-weight: 500; line-height: 31px; }
.enable { display: flex; align-items: center; gap: 33px; margin-top: 29px; }
.enable-l { font-size: 29px; color: #afafc1; }
.switch { position: relative; width: 83px; height: 53px; border-radius: 27px; background: linear-gradient(90deg, #615eff 55%, #fff 55%); border: 2px solid #d9d9e4; display: block; }
.knob { position: absolute; right: 0; top: 0; width: 47px; height: 49px; border-radius: 50%; background: #fff; }
.tabs { margin-top: auto; display: flex; gap: 30px; }
.ptab { padding: 6px 10px 0; height: 68px; font-size: 28px; line-height: 42px; color: #8b8ba0; white-space: nowrap; font-weight: 500; }
.ptab--on { color: #1a194d; border-bottom: 5px solid #1a194d; padding-right: 12px; }

.body { flex: 1; background: #f8f8fa; padding: 39px 40px 0 39px; display: flex; flex-direction: column; gap: 20px; }
.card { background: #fff; border-radius: 20px; box-shadow: 0 2px 8px rgba(26, 25, 77, 0.08); }
.card-status { height: 169px; padding: 0 40px; display: flex; align-items: center; }
.st-box { width: 88px; height: 88px; border-radius: 24px; background: #f0fbfc; display: flex; align-items: center; justify-content: center; flex: none; }
.st-t { margin-left: 30px; font-size: 33px; font-weight: 700; color: #1a194d; }
.btn-reset { margin-left: auto; width: 225px; height: 64px; border: 2px solid #d9d9e4; border-radius: 10px; background: #fff; color: #afafc1; font: 600 24px Inter, sans-serif; padding: 0; }
.btn-sync { margin-left: 11px; width: 196px; height: 64px; border: 0; border-radius: 10px; background: #615eff; color: #fff; font: 600 24px Inter, sans-serif; display: flex; align-items: center; justify-content: center; gap: 15px; padding: 0; box-shadow: 0 1px 4px rgba(26, 25, 77, 0.2); }
.card-streams { height: 340px; display: flex; flex-direction: column; }
.sc-head { height: 152px; flex: none; padding: 0 40px; display: flex; align-items: center; justify-content: space-between; border-bottom: 2px solid #e8e8ed; }
.sc-t { margin: 0; font-size: 32.600px; font-weight: 700; color: #1a194d; }
.search { width: 799px; height: 70px; border: 2px solid #e8e8ed; border-radius: 8px; display: flex; align-items: center; padding-left: 18px; gap: 20px; }
.search-p { font-size: 29px; color: #afafc1; }
.row { display: grid; grid-template-columns: 206px 924px 1fr 88px; padding-left: 30px; align-items: center; font-size: 24px; }
.row--h { height: 83px; color: #717189; border-bottom: 2px solid #f4f4f7; flex: none; }
.row--d { flex: 1; color: #1a194d; }
.lr { display: flex; align-items: center; gap: 8px; }
.rs { display: flex; align-items: center; gap: 19px; padding-left: 8px; }
.ago { font-size: 22px; color: #afafc1; }
.kebab { display: flex; flex-direction: column; align-items: center; gap: 3px; padding-right: 20px; }
.kebab i { width: 6px; height: 6px; border-radius: 50%; background: #afafc1; }

/* taskbar */
.taskbar { height: 94px; flex: none; background: #eeeeef; display: flex; align-items: flex-start; font-family: "Open Sans", "Noto Sans", sans-serif; }
.tb-logo { margin: 30px 0 0 40px; flex: none; }
.apps { display: flex; margin-left: 495px; flex: none; }
.app-i { width: 88px; height: 94px; display: flex; flex-direction: column; align-items: center; padding-top: 24px; }
.app-i svg { height: 46px; width: 48px; flex: none; }
.app-i--on { background: linear-gradient(#f6f6f6, #f6f6f6) center 10px / 76px 78px no-repeat; }
.dot { width: 10px; height: 6px; margin-top: 11px; background: #8a8a8a; border-radius: 3px; }
.dot--off { visibility: hidden; }
.dot--bar { width: 32px; background: #0a6cc7; }
.tray { display: flex; align-items: center; height: 94px; margin-left: 136px; flex: none; color: #222; }
.tr-cloud { margin-left: 38px; }
.tr-eng { margin-left: 34px; font-size: 23px; letter-spacing: -0.5px; }
.tr-wifi { margin-left: 37px; }
.tr-vol { margin-left: 18px; }
.tr-bat { margin-left: 15px; }
.clock { width: 155px; margin-left: 4px; display: flex; flex-direction: column; align-items: flex-end; font-size: 24px; line-height: 32px; letter-spacing: -0.4px; }
.tr-bell { margin-left: 17px; }
.tr-copilot { margin-left: 34px; }
.ta-t { font: 700 18px "Open Sans", sans-serif; fill: #4b53bc; }
.xl-t { font: 700 18px "Open Sans", sans-serif; fill: #fff; }
.pre-t { font: 700 14px "Open Sans", sans-serif; fill: #222; }
```
